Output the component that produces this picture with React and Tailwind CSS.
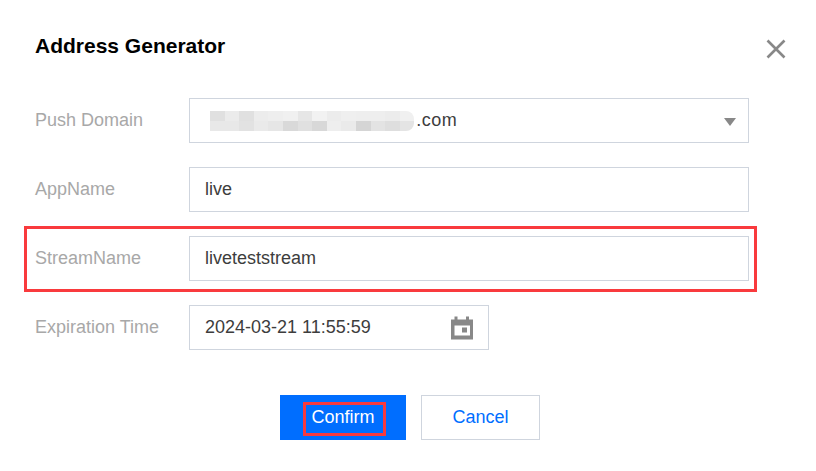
import React from "react"

const blurTop = [
  "bg-[#e0e0e0]", "bg-[#ebebeb]", "bg-[#e0e0e0]", "bg-[#ececec]", "bg-[#eeeeee]", "bg-[#f0f0f0]", "bg-[#e6e6e6]",
  "bg-[#f2f2f2]", "bg-[#ececec]", "bg-[#efefef]", "bg-[#eeeeee]", "bg-[#eeeeee]", "bg-[#ececec]", "bg-[#f0f0f0]",
]
const blurBottom = [
  "bg-[#e8e8e8]", "bg-[#e8e8e8]", "bg-[#e2e2e2]", "bg-[#eaeaea]", "bg-[#e6e6e6]", "bg-[#d9d9d9]", "bg-[#e0e0e0]",
  "bg-[#d8d8d8]", "bg-[#eeeeee]", "bg-[#eaeaea]", "bg-[#d5d5d5]", "bg-[#e3e3e3]", "bg-[#dedede]", "bg-[#e4e4e4]",
]

const Label = ({ children }) => (
  <label className="w-[154px] shrink-0 text-[#a8a8a8]">{children}</label>
)

const Field = ({ className = "", children }) => (
  <div className={`h-[45px] border border-[#cfd5de] bg-white flex items-center px-[15px] text-[#3d3d3d] ${className}`}>
    {children}
  </div>
)

const App = () => {
  return (
    <div className="w-[816px] h-[471px] bg-white text-[18px] overflow-hidden font-['Liberation_Sans',Arial,sans-serif]">
      <div className="relative px-[35px] pt-[33px]">
        <h2 className="text-[21px] leading-[26px] font-bold text-black">Address Generator</h2>
        <button className="absolute top-[38px] left-[765px] text-[#888888]">
          <svg width="22" height="22" viewBox="0 0 22 22" fill="none" stroke="currentColor" strokeWidth="2.6">
            <path d="M2.5 2.5 L19.5 19.5 M19.5 2.5 L2.5 19.5" />
          </svg>
        </button>

        <div className="mt-[39px] flex flex-col gap-[24px] w-[714px]">
          <div className="flex items-center">
            <Label>Push Domain</Label>
            <Field className="flex-1 justify-between pl-[20px] pr-[12px]">
              <div className="flex items-center">
                <div className="flex flex-col rounded-r-[8px] overflow-hidden">
                  <div className="flex h-[10px]">
                    {blurTop.map((c, i) => <div key={i} className={`w-[14.6px] ${c}`} />)}
                  </div>
                  <div className="flex h-[10px]">
                    {blurBottom.map((c, i) => <div key={i} className={`w-[14.6px] ${c}`} />)}
                  </div>
                </div>
                <span className="ml-[2px] tracking-[0.5px]">.com</span>
              </div>
              <svg width="12" height="8" viewBox="0 0 12 8" className="text-[#888888] mt-[2px]" fill="currentColor">
                <path d="M0 0 H12 L6 8 Z" />
              </svg>
            </Field>
          </div>

          <div className="flex items-center">
            <Label>AppName</Label>
            <Field className="flex-1">live</Field>
          </div>

          <div className="relative flex items-center">
            <div className="absolute top-[-10px] bottom-[-11px] left-[-11px] right-[-8px] border-[3px] border-[#f93a3d] pointer-events-none" />
            <Label>StreamName</Label>
            <Field className="flex-1">liveteststream</Field>
          </div>

          <div className="flex items-center">
            <Label>Expiration Time</Label>
            <Field className="w-[300px] justify-between pr-[15px]">
              <span>2024-03-21 11:55:59</span>
              <svg width="22" height="24" viewBox="0 0 22 24" className="text-[#888888]" fill="currentColor">
                <path d="M3.5 0.5h3v3h8.5v-3h3v3H22v20H0v-20h3.5v-3ZM3.5 9.5v10H19v-10H3.5Z" fillRule="evenodd" />
                <rect x="11" y="11.5" width="5" height="5" />
              </svg>
            </Field>
          </div>
        </div>

        <div className="mt-[45px] flex justify-center gap-[15px] pl-[4px]">
          <button className="relative w-[126px] h-[45px] bg-[#006eff] text-white">
            Confirm
            <div className="absolute left-[23px] top-[7px] w-[83px] h-[34px] border-[3px] border-[#f93a3d]" />
          </button>
          <button className="w-[119px] h-[45px] border border-[#cfd5de] bg-white text-[#006eff]">Cancel</button>
        </div>
      </div>
    </div>
  )
}

export default App
